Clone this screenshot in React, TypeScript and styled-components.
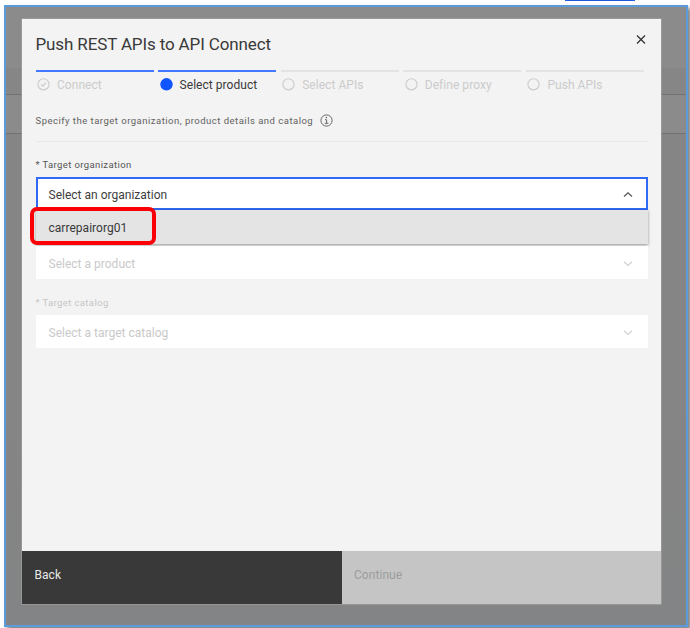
import React from "react";
import styled, { createGlobalStyle } from "styled-components";

const GlobalStyle = createGlobalStyle`
  * { box-sizing: border-box; }
  body { margin: 0; background: #fff; overflow: hidden; }
`;

const Page = styled.div`
  position: relative;
  width: 690px;
  height: 628px;
  padding: 5px 2px 1px 4px;
  background: #fff;
  font-family: Roboto, "Liberation Sans", sans-serif;
  color: #393939;
  overflow: hidden;
`;

const TopAccent = styled.div`
  position: absolute;
  top: 0;
  left: 565px;
  width: 70px;
  height: 1px;
  background: #1f57e0;
`;

const Backdrop = styled.div`
  width: 684px;
  height: 622px;
  padding: 12px 0 0 16px;
  border: 2px solid #5b9bd9;
  background: linear-gradient(
    #8b8b8b 0 61px, #868686 61px 87px, #717171 87px 88px, #8b8b8b 88px 126px,
    #717171 126px 127px, #858585 127px 390px, #838485 100%
  );
  box-shadow: 3px 3px 4px rgba(0, 0, 0, 0.5);
`;

const Modal = styled.section`
  display: flex;
  flex-direction: column;
  width: 639px;
  height: 585px;
  background: #f3f3f3;
  box-shadow: 0 0 0 0.5px #aaa;
`;

const Header = styled.header`
  display: flex;
  justify-content: space-between;
  height: 51px;
  padding: 13px 14px 0 13.5px;
`;

const Title = styled.h1`
  margin: 0;
  font-size: 17px;
  font-weight: 400;
  line-height: 24px;
  letter-spacing: -0.13px;
  white-space: nowrap;
`;

const CloseButton = styled.button`
  display: block;
  width: 12px;
  height: 14px;
  padding: 0;
  border: 0;
  background: none;
`;

const Steps = styled.ol`
  display: grid;
  grid-template-columns: repeat(5, 1fr);
  gap: 4.5px;
  width: 608.5px;
  height: 41px;
  margin: 0 0 0 13.5px;
  padding: 0;
  list-style: none;
`;

type StepState = "done" | "current" | "todo";

const StepItem = styled.li<{ $state: StepState }>`
  display: flex;
  align-items: center;
  gap: 7px;
  height: 27px;
  padding: 0 0 0 1.5px;
  border-top: 2px solid ${(p) => (p.$state === "todo" ? "#e3e3e3" : "#4178ff")};
  color: ${(p) => (p.$state === "current" ? "#393939" : "#cbcbcb")};
  font-size: 12px;
  letter-spacing: 0.04px;
  white-space: nowrap;
`;

const Description = styled.p`
  display: flex;
  align-items: center;
  gap: 7px;
  width: 612px;
  height: 31px;
  margin: 0 0 0 13.5px;
  padding-bottom: 11px;
  border-bottom: 1px solid #e8e8e8;
  color: #626262;
  font-size: 9.5px;
  letter-spacing: 0.49px;
  white-space: nowrap;
`;

const Form = styled.div`
  flex: 1;
  width: 612px;
  margin-left: 13.5px;
`;

const Field = styled.div`
  position: relative;
`;

const Label = styled.label<{ $muted?: boolean; $height: number }>`
  display: flex;
  align-items: flex-end;
  height: ${(p) => p.$height}px;
  padding-bottom: 6px;
  color: ${(p) => (p.$muted ? "#c6c6c6" : "#555")};
  font-size: 9.5px;
  line-height: 12px;
  letter-spacing: 0.38px;
`;

const Select = styled.div<{ $open?: boolean }>`
  display: flex;
  align-items: center;
  justify-content: space-between;
  height: 33px;
  padding: 2px 15px 0 13px;
  background: #fff;
  color: ${(p) => (p.$open ? "#3d3d3d" : "#c9c9c9")};
  box-shadow: ${(p) => (p.$open ? "inset 0 0 0 2px #2f69f5" : "none")};
  font-size: 12px;
  letter-spacing: 0.01px;
`;

const ProductSelect = styled(Select)`
  margin-top: 36px;
`;

const Menu = styled.div`
  position: absolute;
  top: 68px;
  left: 0;
  width: 612px;
  height: 34px;
  padding-left: 13px;
  background: #e4e4e4;
  box-shadow: 0 1px 3px rgba(0, 0, 0, 0.4);
  font-size: 12px;
  line-height: 36px;
  letter-spacing: 0.03px;
`;

const Highlight = styled.div`
  position: absolute;
  top: 207px;
  left: 30px;
  width: 126px;
  height: 38px;
  border: 4px solid #fb0007;
  border-radius: 7px;
`;

const Footer = styled.footer`
  display: grid;
  grid-template-columns: 1fr 1fr;
  height: 53px;
`;

const FooterButton = styled.button<{ $primary?: boolean }>`
  display: flex;
  padding: 16px 12.5px;
  border: 0;
  background: ${(p) => (p.$primary ? "#c5c5c5" : "#393939")};
  color: ${(p) => (p.$primary ? "#9c9c9c" : "#e8e8e8")};
  font-family: inherit;
  font-size: 12px;
  line-height: 16px;
  letter-spacing: 0.06px;
`;

const StepIcon = ({ state }: { state: StepState }) => (
  <svg width="13" height="13" viewBox="0 0 13 13" fill="none">
    {state === "current" ? (
      <circle cx="6.5" cy="6.3" r="6.2" fill="#1155ff" />
    ) : (
      <circle cx="6.5" cy="6.3" r="5.6" stroke="#cbcbcb" strokeWidth="1.1" />
    )}
    {state === "done" && <path d="M4 6.4 5.8 8.1 9 4.6" stroke="#cbcbcb" strokeWidth="1.2" />}
  </svg>
);

const Chevron = ({ up }: { up?: boolean }) => (
  <svg width="10" height="6" viewBox="0 0 10 6" fill="none">
    <path
      d={up ? "M1 4.5 5 .8 9 4.5" : "M1 .7 5 4.4 9 .7"}
      stroke={up ? "#555" : "#d0d0d0"}
      strokeWidth="1.2"
    />
  </svg>
);

const InfoIcon = () => (
  <svg width="13" height="13" viewBox="0 0 13 13" fill="none" stroke="#666">
    <circle cx="6.5" cy="6.5" r="5.6" />
    <path d="M5 5.7H6.6V9.2M4.7 9.3H8.4" />
    <circle cx="6.4" cy="3.6" r=".75" fill="#666" stroke="none" />
  </svg>
);

const steps: { name: string; state: StepState }[] = [
  { name: "Connect", state: "done" },
  { name: "Select product", state: "current" },
  { name: "Select APIs", state: "todo" },
  { name: "Define proxy", state: "todo" },
  { name: "Push APIs", state: "todo" },
];

export default function App() {
  return (
    <Page>
      <GlobalStyle />
      <TopAccent />
      <Backdrop>
        <Modal>
          <Header>
            <Title>Push REST APIs to API Connect</Title>
            <CloseButton aria-label="Close">
              <svg width="12" height="14" viewBox="0 0 12 14">
                <path d="M2 3.5 10 11.5M10 3.5 2 11.5" stroke="#333" strokeWidth="1.3" />
              </svg>
            </CloseButton>
          </Header>
          <Steps>
            {steps.map((s) => (
              <StepItem key={s.name} $state={s.state}>
                <StepIcon state={s.state} />
                {s.name}
              </StepItem>
            ))}
          </Steps>
          <Description>
            Specify the target organization, product details and catalog
            <InfoIcon />
          </Description>
          <Form>
            <Field>
              <Label $height={35}>* Target organization</Label>
              <Select $open>
                Select an organization
                <Chevron up />
              </Select>
              <Menu>carrepairorg01</Menu>
            </Field>
            <Field>
              <ProductSelect>
                Select a product
                <Chevron />
              </ProductSelect>
            </Field>
            <Field>
              <Label $muted $height={36}>* Target catalog</Label>
              <Select>
                Select a target catalog
                <Chevron />
              </Select>
            </Field>
          </Form>
          <Footer>
            <FooterButton>Back</FooterButton>
            <FooterButton $primary disabled>Continue</FooterButton>
          </Footer>
        </Modal>
      </Backdrop>
      <Highlight />
    </Page>
  );
}
